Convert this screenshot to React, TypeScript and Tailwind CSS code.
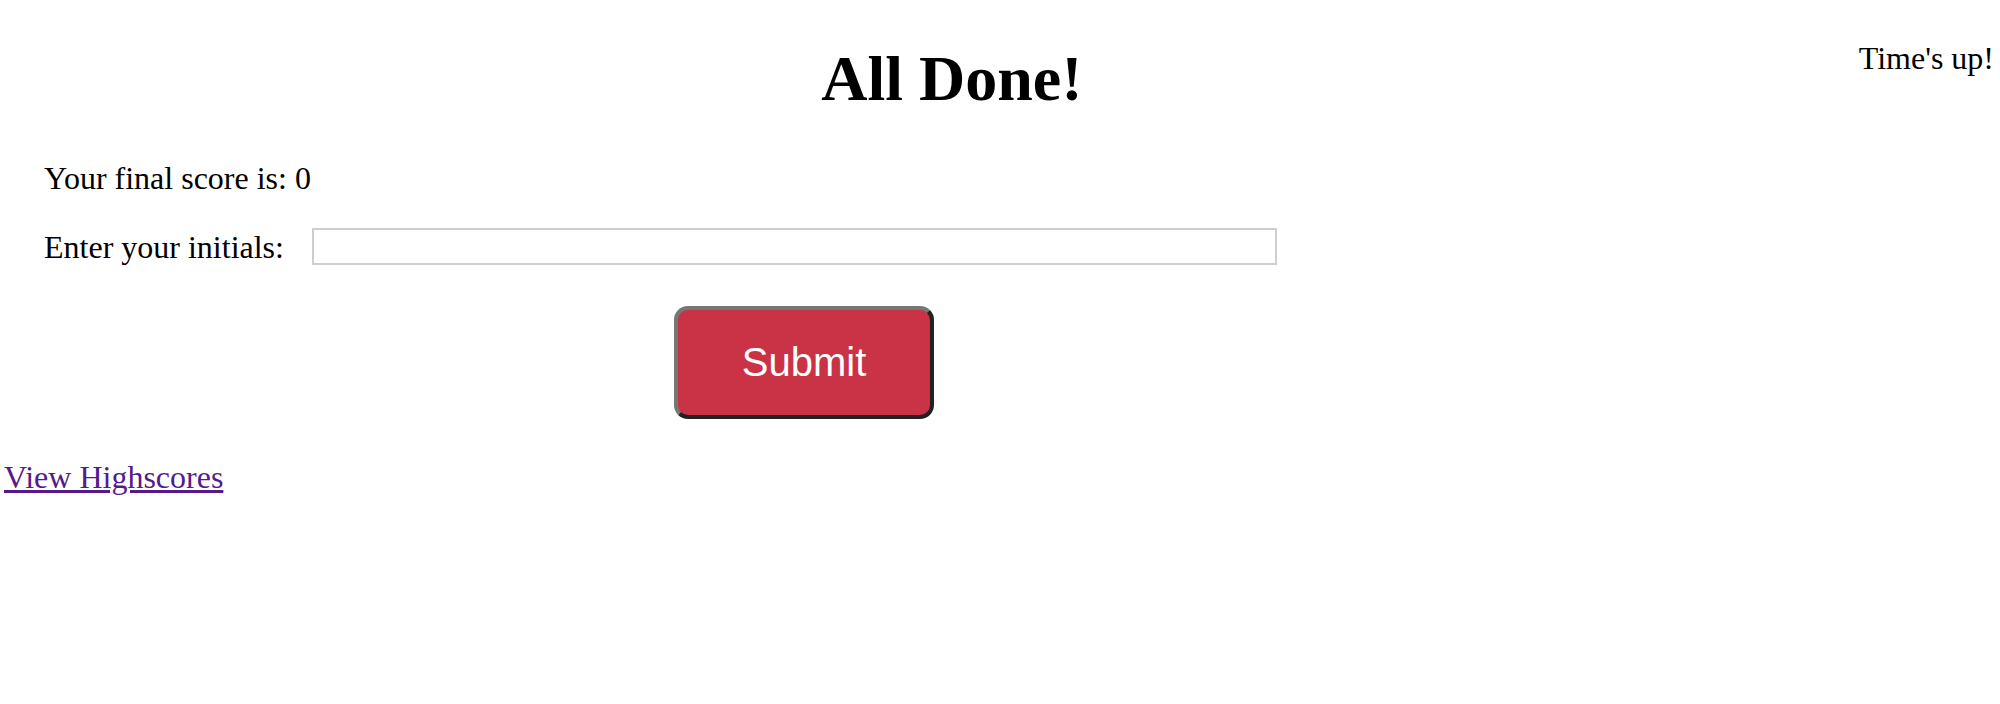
export default function App() {
  return (
    <div className="h-[704px] w-full bg-white text-black text-[32px] font-['Liberation_Serif','Times_New_Roman',serif]">
      {/* Header */}
      <div className="flex items-start">
        <h1 className="flex-1 mt-[43px] pl-[45px] text-center text-[64px] font-bold leading-[71px]">
          All Done!
        </h1>
        <div className="pt-[40px] pr-[6px] leading-[36px] whitespace-nowrap">Time's up!</div>
      </div>

      {/* Score form */}
      <div className="pl-[44px] pt-[46px]">
        <p className="leading-[36px]">Your final score is: 0</p>
        <div className="mt-[32px] flex items-center">
          <label className="leading-[36px]">Enter your initials:</label>
          <input
            type="text"
            className="ml-[28px] h-[37px] w-[965px] border-2 border-[#cfcfcf] bg-white outline-none"
          />
        </div>
        <button className="mt-[41px] ml-[630px] h-[113px] w-[260px] rounded-[14px] border-4 border-t-[#767676] border-l-[#767676] border-b-[#222222] border-r-[#222222] bg-[#c93345] pb-[1px] text-[40px] leading-[46px] text-white font-['Liberation_Sans',Arial,sans-serif]">
          Submit
        </button>
      </div>

      {/* Footer link */}
      <div className="mt-[40px] pl-[4px] leading-[36px]">
        <a href="#" className="text-[#551a8b] underline">
          View Highscores
        </a>
      </div>
    </div>
  );
}
